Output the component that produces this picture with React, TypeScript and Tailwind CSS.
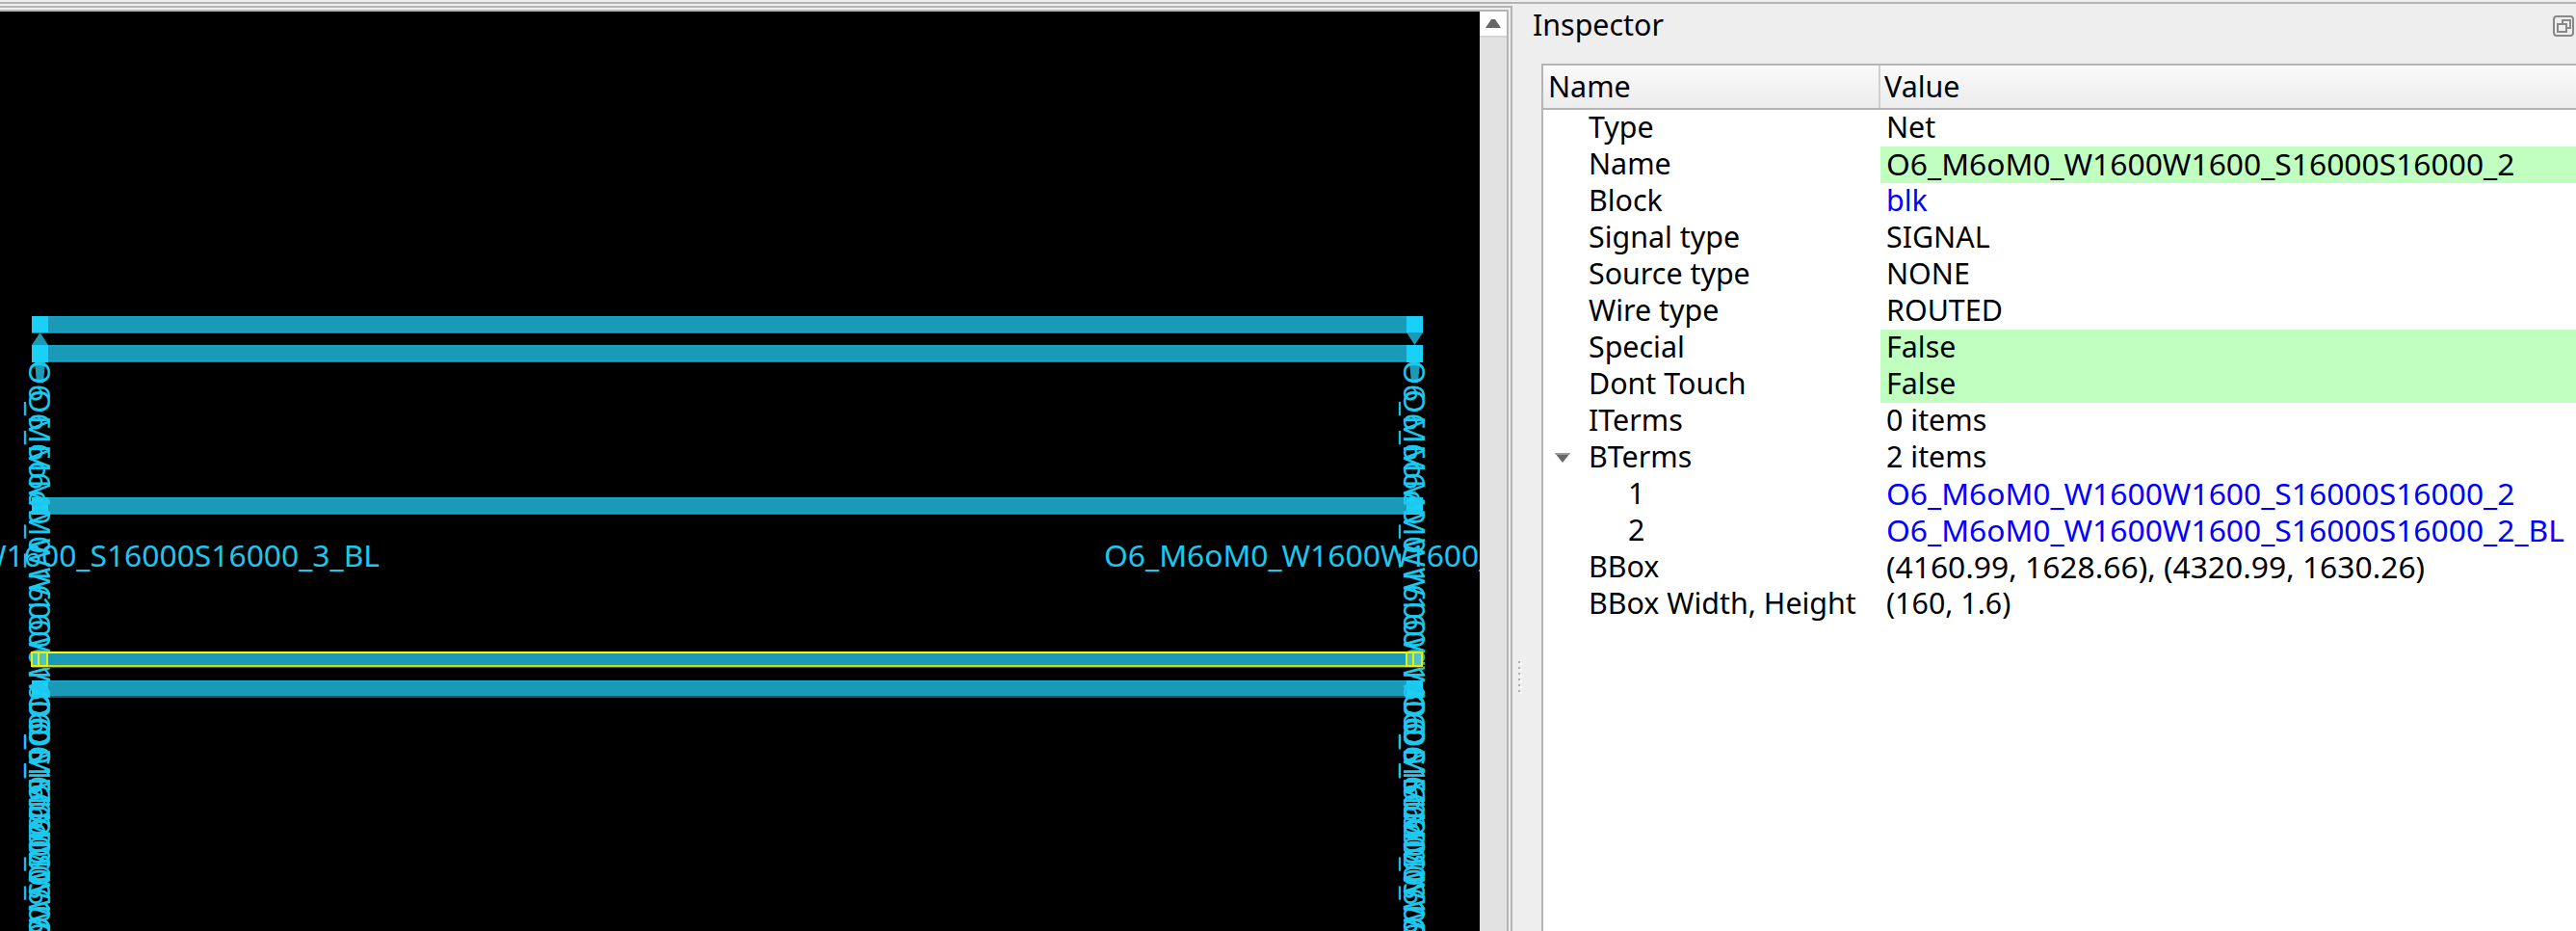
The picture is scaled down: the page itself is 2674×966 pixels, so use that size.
const rows: { n: string; v: string; g?: boolean; l?: boolean; i?: number; a?: boolean }[] = [
  { n: "Type", v: "Net" },
  { n: "Name", v: "O6_M6oM0_W1600W1600_S16000S16000_2", g: true },
  { n: "Block", v: "blk", l: true },
  { n: "Signal type", v: "SIGNAL" },
  { n: "Source type", v: "NONE" },
  { n: "Wire type", v: "ROUTED" },
  { n: "Special", v: "False", g: true },
  { n: "Dont Touch", v: "False", g: true },
  { n: "ITerms", v: "0 items" },
  { n: "BTerms", v: "2 items", a: true },
  { n: "1", v: "O6_M6oM0_W1600W1600_S16000S16000_2", l: true, i: 1 },
  { n: "2", v: "O6_M6oM0_W1600W1600_S16000S16000_2_BL", l: true, i: 1 },
  { n: "BBox", v: "(4160.99, 1628.66), (4320.99, 1630.26)" },
  { n: "BBox Width, Height", v: "(160, 1.6)" },
];

const PIN = "#1bd0f8";
const BAR = "#1a9ab6";
const TEXT = "#1cc8ee";
const FONT = "'Noto Sans', sans-serif";
const LABELS: [number, string][] = [
  [374, "O6_M6oM0_W1600W1600_S16000S16000_1_BL"],
  [404, "O6_M6oM0_W1600W1600_S16000S16000_4_BL"],
  [719, "O6_M6oM0_W1600W1600_S16000S16000_2_BL"],
  [749, "O6_M6oM0_W1600W1600_S16000S16000_0_BL"],
];

function Pins({ x, flip }: { x: number; flip?: boolean }) {
  const l = x;
  const m = x + 8.5;
  const r = x + 17;
  return (
    <g>
      {flip ? (
        <polygon points={`${l},345 ${r},345 ${m},358`} fill={BAR} />
      ) : (
        <polygon points={`${m},345 ${r},358 ${l},358`} fill={BAR} />
      )}
      <polygon points={`${l + 3},376 ${r - 3},376 ${r - 5},397 ${l + 5},397`} fill={BAR} />
      <rect x={l} y={328} width={17} height={17} fill={PIN} />
      <rect x={l} y={358} width={17} height={18} fill={PIN} />
      <rect x={l} y={516} width={17} height={18} fill={PIN} />
      <rect x={l} y={706} width={17} height={18} fill={PIN} />
    </g>
  );
}

function Column({ x }: { x: number }) {
  return (
    <g fontFamily={FONT} fontSize={31.8} fill={TEXT}>
      {LABELS.map(([y, t]) => (
        <text key={y} transform={`translate(${x} ${y}) rotate(90)`}>
          {t}
        </text>
      ))}
    </g>
  );
}

function Selected({ x }: { x: number }) {
  return (
    <g fill="none" stroke="#e6f000" strokeWidth={2}>
      <rect x={x} y={677} width={16} height={14} fill="#4cc4c8" />
      <line x1={x + 7} y1={677} x2={x + 7} y2={691} />
    </g>
  );
}

function Canvas() {
  const bars = [328, 358, 516, 706];
  return (
    <svg className="block h-full w-full" viewBox="0 12 1536 954" preserveAspectRatio="none">
      <rect x={0} y={12} width={1536} height={954} fill="#000" />
      {bars.map((y) => (
        <g key={y}>
          <rect x={33} y={y} width={1444} height={17.5} fill={BAR} />
          <rect x={33} y={y} width={1444} height={1.5} fill="#17a8c8" />
          <rect x={33} y={y + 16} width={1444} height={1.5} fill="#17a8c8" />
        </g>
      ))}
      <rect x={33} y={722} width={1444} height={2} fill="#0d5a6c" />
      <Pins x={33} />
      <Pins x={1460} flip />
      <Column x={30} />
      <Column x={1457} />
      <rect x={33} y={677} width={1444} height={14} fill={BAR} />
      <rect x={33} y={676} width={1444} height={2} fill="#ffff00" />
      <rect x={33} y={690} width={1444} height={2} fill="#b6e01c" />
      <rect x={33} y={692} width={1444} height={1} fill="#4d5a00" />
      <Selected x={33} />
      <Selected x={1460} />
      <g fontFamily={FONT} fontSize={31.8} fill={TEXT}>
        <text x={394} y={588} textAnchor="end">O6_M6oM0_W1600W1600_S16000S16000_3_BL</text>
        <text x={1146} y={588}>O6_M6oM0_W1600W1600_S16000S16000_3_BL</text>
      </g>
    </svg>
  );
}

function Row({ r }: { r: (typeof rows)[number] }) {
  const wide = r.v.startsWith("O6") || r.v.startsWith("(4");
  return (
    <div className="flex h-[38px] items-center">
      <div className="relative flex h-full w-[350px] shrink-0 items-center pb-[2px]">
        {r.a && (
          <svg className="absolute left-[12px] top-[14px]" width="16" height="11" viewBox="0 0 16 11">
            <polygon points="0,0 16,0 8,10" fill="#666666" />
            <polygon points="0,0 16,0 15,2 1,2" fill="#999999" />
          </svg>
        )}
        <span className={r.i ? "pl-[88px]" : "pl-[47px]"}>{r.n}</span>
      </div>
      <div className={`flex h-full min-w-0 flex-1 items-center pl-[6px] whitespace-nowrap ${wide ? "pb-[3px] text-[31.8px]" : "pb-[2px]"} ${r.g ? "bg-[#c0ffc0]" : ""} ${r.l ? "text-[#0000ff]" : ""}`}>
        {r.v}
      </div>
    </div>
  );
}

export default function App() {
  return (
    <div className="flex h-[966px] w-[2674px] flex-col overflow-hidden bg-[#eeeeee] font-['Noto_Sans',sans-serif] text-[30.4px] leading-none text-black">
      <div className="h-[2px] shrink-0 bg-[#eeeeee]" />
      <div className="h-[2px] shrink-0 bg-[#b4b4b4]" />
      <div className="flex min-h-0 flex-1">
        <div className="flex w-[1570px] shrink-0 flex-col">
          <div className="h-[2px] shrink-0 bg-[#eeeeee]" />
          <div className="flex min-h-0 flex-1 flex-col border-t-2 border-r-2 border-[#b4b4b4]">
            <div className="flex min-h-0 flex-1 flex-col border-r-2 border-[#eeeeee] pt-[2px]">
              <div className="flex min-h-0 flex-1 border-t-2 border-r-2 border-[#b4b4b4]">
                <div className="h-full w-[1536px] shrink-0 overflow-hidden">
                  <Canvas />
                </div>
                <div className="flex h-full flex-1 flex-col bg-[#e2e2e2]">
                  <div className="flex h-[27px] items-center justify-center border-b-2 border-[#d4d4d4] bg-[#fdfdfd]">
                    <svg width="16" height="9" viewBox="0 0 16 9">
                      <polygon points="6,0 10,0 16,9 0,9" fill="#666666" />
                    </svg>
                  </div>
                </div>
              </div>
            </div>
          </div>
        </div>
        <div className="relative flex min-w-0 flex-1 flex-col pl-[30px]">
          <div className="flex h-[62px] shrink-0 items-start justify-between pr-[2px]">
            <span className="-ml-[9px] pt-[6px] leading-[32px]">Inspector</span>
            <svg className="mt-[12px]" width="22" height="22" viewBox="0 0 22 22" fill="none" stroke="#888888" strokeWidth="2">
              <rect x="1" y="1" width="20" height="20" rx="3" />
              <rect x="10" y="5" width="8" height="8" />
              <rect x="5" y="9" width="9" height="8" fill="#eeeeee" />
            </svg>
          </div>
          <div className="min-h-0 flex-1 border-t-2 border-l-2 border-[#b4b4b4] bg-white">
            <div className="flex h-[46px] border-b-2 border-[#b4b4b4] bg-gradient-to-b from-[#fafafa] to-[#ececec]">
              <div className="flex w-[350px] shrink-0 items-center border-r-2 border-[#cfcfcf] pl-[5px]">Name</div>
              <div className="flex flex-1 items-center pl-[4px]">Value</div>
            </div>
            {rows.map((r) => (
              <Row key={r.n} r={r} />
            ))}
          </div>
          <div className="absolute top-[682px] left-[6px] flex flex-col gap-[4px]">
            {[0, 1, 2, 3, 4, 5].map((i) => (
              <div key={i} className="h-[2px] w-[2px] bg-[#b0b0b0] shadow-[2px_2px_0_#fafafa]" />
            ))}
          </div>
        </div>
      </div>
    </div>
  );
}
